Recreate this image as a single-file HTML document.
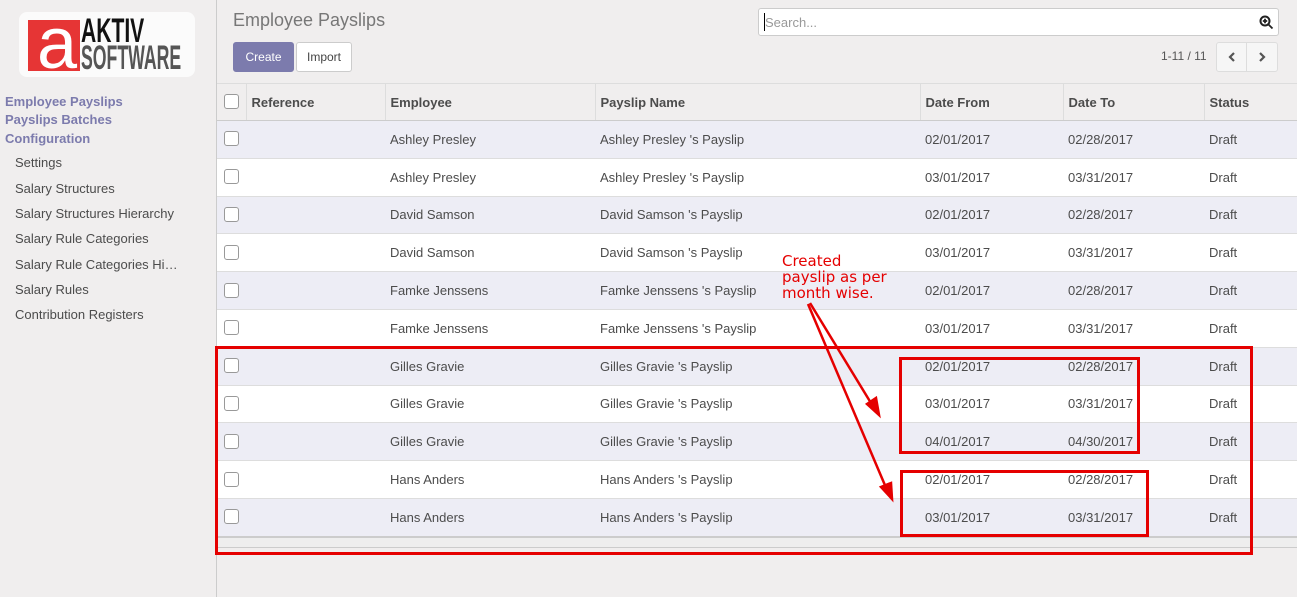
<!DOCTYPE html>
<html><head><style>
body{margin:0;width:1297px;height:597px;overflow:hidden;background:#f0eeee;font-family:"Liberation Sans",sans-serif;font-size:13px;color:#4c4c4c;position:relative}
.side{position:absolute;left:0;top:0;width:216px;height:597px;background:#f0eeee;border-right:1px solid #ccc}
.logo{position:absolute;left:19px;top:12px;width:176px;height:65px;background:#fbfbfb;border-radius:8px}
.sec{position:absolute;left:5px;font-weight:bold;color:#7c7bad;font-size:13px}
.it{position:absolute;left:15px;font-size:13px;color:#4c4c4c}
.main{position:absolute;left:217px;top:0;right:0;bottom:0}
.title{position:absolute;left:16px;top:10px;font-size:18px;color:#777}
.btn{position:absolute;top:42px;height:28px;line-height:28px;font-size:12px;border-radius:3px;text-align:center}
table{position:absolute;left:0;top:83px;width:1080px;border-collapse:collapse}
td,th{height:36.8px;padding:0 5px;text-align:left;border-top:1px solid #ddd;font-weight:normal;white-space:nowrap}
th{font-weight:bold;background:#f0eeee;height:36px;border-bottom:1px solid #ccc;border-left:1px solid #ddd}
th:first-child{border-left:none}
tbody tr:nth-child(odd){background:#ededf5}
tbody tr:nth-child(even){background:#fff}
.cb{display:inline-block;width:13px;height:13px;border:1px solid #999;border-radius:3px;background:#fff;vertical-align:middle;position:relative;top:-1px}
.box{position:absolute;border:3px solid #e50000;box-sizing:border-box}
</style></head><body>
<div class="side">
<div class="logo">
<div style="position:absolute;left:9px;top:8px;width:52px;height:51px;background:#e63535"></div>
<div style="position:absolute;left:18px;top:2px;font-size:72px;line-height:60px;color:#fff;font-family:'Liberation Sans';">a</div>
<div style="position:absolute;left:62px;top:4px;font-size:34px;font-weight:bold;color:#111;transform:scaleX(.62);transform-origin:left;line-height:30px">AKTIV</div>
<div style="position:absolute;left:62px;top:31px;font-size:34px;color:#555;transform:scaleX(.52);transform-origin:left;line-height:30px;font-weight:bold">SOFTWARE</div>
</div>
<div class="sec" style="top:94px">Employee Payslips</div>
<div class="sec" style="top:112px">Payslips Batches</div>
<div class="sec" style="top:131px">Configuration</div>
<div class="it" style="top:155px">Settings</div>
<div class="it" style="top:181px">Salary Structures</div>
<div class="it" style="top:206px">Salary Structures Hierarchy</div>
<div class="it" style="top:231px">Salary Rule Categories</div>
<div class="it" style="top:257px">Salary Rule Categories Hi…</div>
<div class="it" style="top:282px">Salary Rules</div>
<div class="it" style="top:307px">Contribution Registers</div>
</div>
<div class="main">
<div class="title">Employee Payslips</div>
<div class="btn" style="left:16px;width:59px;background:#7c7bad;color:#fff;border:1px solid #7c7bad">Create</div>
<div class="btn" style="left:79px;width:54px;background:#fff;color:#444;border:1px solid #ccc">Import</div>
<div style="position:absolute;left:541px;top:8px;width:519px;height:26px;background:#fff;border:1px solid #ccc;border-radius:3px"><span style="position:absolute;left:6px;top:6px;color:#999">Search...</span><span style="position:absolute;left:-1px;top:4px;width:1px;height:18px;background:#000;margin-left:6px"></span>
<svg style="position:absolute;right:4px;top:6px" width="15" height="15" viewBox="0 0 15 15"><circle cx="6" cy="6" r="4.5" fill="none" stroke="#222" stroke-width="2"/><path d="M9.5 9.5L13.5 13.5M6 3.8v4.4M3.8 6h4.4" stroke="#222" stroke-width="1.8"/></svg></div>
<div style="position:absolute;left:944px;top:49px;font-size:12px;color:#555">1-11 / 11</div>
<div style="position:absolute;left:999px;top:42px;width:60px;height:28px;border:1px solid #ddd;border-radius:3px;background:#f6f6f6"><div style="position:absolute;left:29px;top:0;width:1px;height:28px;background:#ddd"></div>
<svg style="position:absolute;left:10px;top:9px" width="10" height="10"><path d="M7 1L3 5L7 9" stroke="#555" stroke-width="2.2" fill="none"/></svg>
<svg style="position:absolute;left:40px;top:9px" width="10" height="10"><path d="M3 1L7 5L3 9" stroke="#555" stroke-width="2.2" fill="none"/></svg></div>
<table>
<colgroup><col style="width:29px"><col style="width:139px"><col style="width:210px"><col style="width:325px"><col style="width:143px"><col style="width:141px"><col style="width:93px"></colgroup>
<thead><tr><th style="padding:0 0 0 7px"><span class="cb"></span></th><th>Reference</th><th>Employee</th><th>Payslip Name</th><th>Date From</th><th>Date To</th><th>Status</th></tr></thead>
<tbody>
<tr><td style="padding-left:7px"><span class="cb"></span></td><td></td><td>Ashley Presley</td><td>Ashley Presley 's Payslip</td><td>02/01/2017</td><td>02/28/2017</td><td>Draft</td></tr>
<tr><td style="padding-left:7px"><span class="cb"></span></td><td></td><td>Ashley Presley</td><td>Ashley Presley 's Payslip</td><td>03/01/2017</td><td>03/31/2017</td><td>Draft</td></tr>
<tr><td style="padding-left:7px"><span class="cb"></span></td><td></td><td>David Samson</td><td>David Samson 's Payslip</td><td>02/01/2017</td><td>02/28/2017</td><td>Draft</td></tr>
<tr><td style="padding-left:7px"><span class="cb"></span></td><td></td><td>David Samson</td><td>David Samson 's Payslip</td><td>03/01/2017</td><td>03/31/2017</td><td>Draft</td></tr>
<tr><td style="padding-left:7px"><span class="cb"></span></td><td></td><td>Famke Jenssens</td><td>Famke Jenssens 's Payslip</td><td>02/01/2017</td><td>02/28/2017</td><td>Draft</td></tr>
<tr><td style="padding-left:7px"><span class="cb"></span></td><td></td><td>Famke Jenssens</td><td>Famke Jenssens 's Payslip</td><td>03/01/2017</td><td>03/31/2017</td><td>Draft</td></tr>
<tr><td style="padding-left:7px"><span class="cb"></span></td><td></td><td>Gilles Gravie</td><td>Gilles Gravie 's Payslip</td><td>02/01/2017</td><td>02/28/2017</td><td>Draft</td></tr>
<tr><td style="padding-left:7px"><span class="cb"></span></td><td></td><td>Gilles Gravie</td><td>Gilles Gravie 's Payslip</td><td>03/01/2017</td><td>03/31/2017</td><td>Draft</td></tr>
<tr><td style="padding-left:7px"><span class="cb"></span></td><td></td><td>Gilles Gravie</td><td>Gilles Gravie 's Payslip</td><td>04/01/2017</td><td>04/30/2017</td><td>Draft</td></tr>
<tr><td style="padding-left:7px"><span class="cb"></span></td><td></td><td>Hans Anders</td><td>Hans Anders 's Payslip</td><td>02/01/2017</td><td>02/28/2017</td><td>Draft</td></tr>
<tr><td style="padding-left:7px"><span class="cb"></span></td><td></td><td>Hans Anders</td><td>Hans Anders 's Payslip</td><td>03/01/2017</td><td>03/31/2017</td><td>Draft</td></tr>
</tbody></table>
<div style="position:absolute;left:0;top:536px;width:1080px;height:9px;background:#eee;border-top:2px solid #ccc;border-bottom:1px solid #ccc"></div>
</div>
<div class="box" style="left:215px;top:346px;width:1038px;height:209px"></div>
<div class="box" style="left:899px;top:357px;width:241px;height:97px"></div>
<div class="box" style="left:900px;top:470px;width:249px;height:67px"></div>
<div style="position:absolute;left:782px;top:253px;color:#e50000;font-size:15px;line-height:16px;font-family:'DejaVu Sans',sans-serif">Created<br>payslip as per<br>month wise.</div>
<svg style="position:absolute;left:0;top:0" width="1297" height="597"><g stroke="#e50000" stroke-width="2.5" fill="#e50000"><line x1="810" y1="303" x2="874" y2="408"/><line x1="808" y1="304" x2="887" y2="490"/><path d="M879 415L867 404L876 398Z"/><path d="M892 499L881 487L891 483Z"/></g></svg>
</body></html>
